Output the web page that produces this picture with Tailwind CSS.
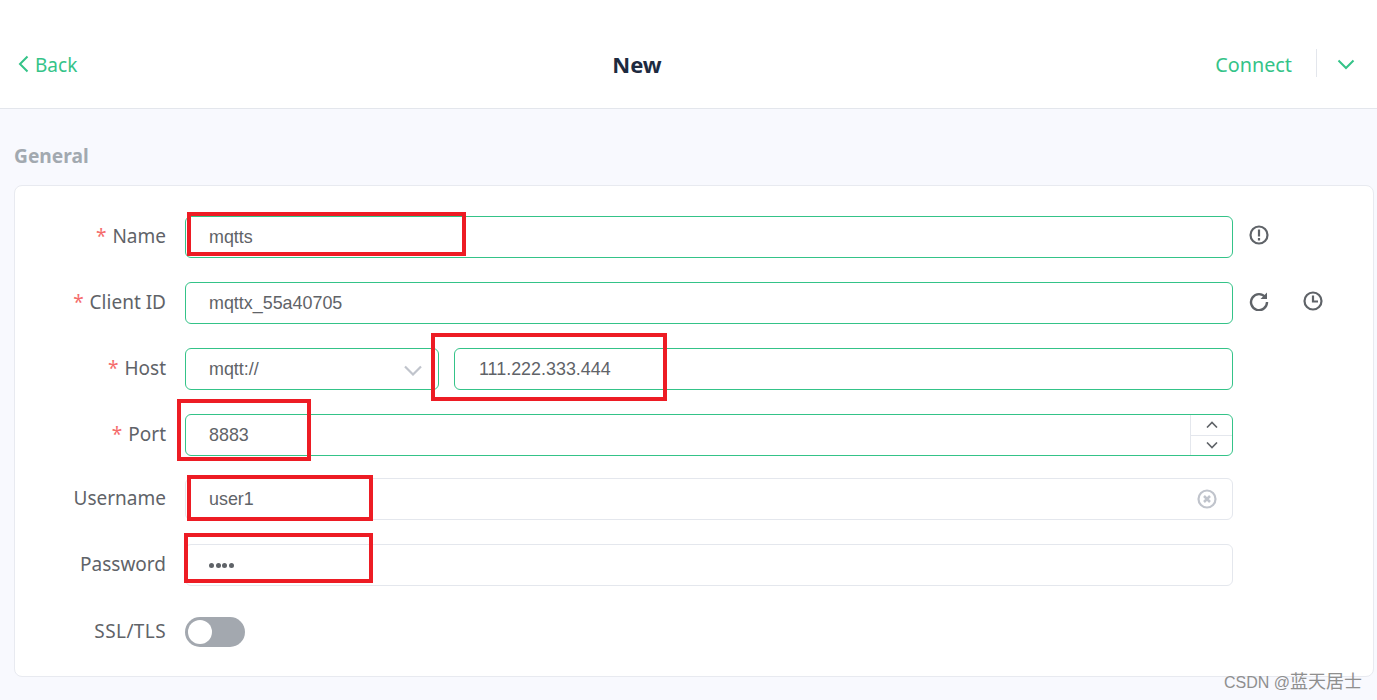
<!DOCTYPE html>
<html lang="en">
<head>
    <meta charset="UTF-8">
    <title>New Connection</title>
    <script src="https://cdn.jsdelivr.net/npm/@tailwindcss/browser@4"></script>
</head>
<body class="bg-[#f8f9fe] h-[700px] overflow-hidden relative font-['Noto_Sans',sans-serif]">
    <!-- header -->
    <header class="h-[109px] bg-white border-b border-[#e3e6ec] flex items-center justify-between pl-[18px] pr-[22px] pt-[20px]">
        <div class="w-[200px] flex items-center gap-[6px] text-[#34c388] text-[19px]">
            <svg class="w-[11px] h-[18px]" viewBox="0 0 11 18" fill="none" stroke="currentColor" stroke-width="2"><path d="M9.5 1.500 2 9l7.500 7.500"/></svg>
            <span class="mt-[2px]">Back</span>
        </div>
        <h1 class="text-[22px] font-bold text-[#1d2a3f]">New</h1>
        <div class="w-[299px] flex items-center justify-end text-[#34c388] text-[19.800px]">
            <span class="mt-[2px]">Connect</span>
            <span class="w-px h-[28px] bg-[#e3e6ec] ml-[24px] mr-[20px] -translate-y-px"></span>
            <svg class="w-[18px] h-[11px]" viewBox="0 0 18 11" fill="none" stroke="currentColor" stroke-width="2"><path d="M1.500 1.500 9 9l7.500-7.500"/></svg>
        </div>
    </header>

    <main class="pl-[14px] pr-[3px]">
        <h2 class="text-[19.200px] font-bold text-[#a2a9b0] h-[76px] pt-[32px] leading-[30px]">General</h2>

        <section class="bg-white border border-[#e8eaf0] rounded-[8px] h-[492px] pt-[30px] text-[19px] text-[#5f6368]">
            <!-- Name -->
            <div class="flex items-center h-[42px]">
                <label class="w-[151px] pb-[2px] text-right"><span class="text-[#f56c6c] mr-[6px]">*</span>Name</label>
                <div class="ml-[19px] w-[1048px] h-[42px] border border-[#34c388] rounded-[6px] flex items-center pl-[23px] font-['Liberation_Sans',sans-serif] text-[17.900px]">mqtts</div>
                <svg class="ml-[16px] mb-[4px] w-[20px] h-[20px]" viewBox="0 0 20 20" fill="none" stroke="#5f6368" stroke-width="2.200"><circle cx="10" cy="10" r="8.500"/><path d="M10 4.500v7M10 13v2.500"/></svg>
            </div>
            <!-- Client ID -->
            <div class="flex items-center h-[42px] mt-[24px]">
                <label class="w-[151px] pb-[2px] text-right"><span class="text-[#f56c6c] mr-[6px]">*</span>Client ID</label>
                <div class="ml-[19px] w-[1048px] h-[42px] border border-[#34c388] rounded-[6px] flex items-center pl-[23px] font-['Liberation_Sans',sans-serif] text-[17.900px]">mqttx_55a40705</div>
                <svg class="ml-[16px] mb-[4px] w-[20px] h-[20px]" viewBox="0 0 20 20" fill="none" stroke="#5f6368" stroke-width="2.400"><path d="M16.500 6.500A8 8 0 1 0 18 11"/><path d="M18 1.500v6.500h-6.500z" fill="#5f6368" stroke="none"/></svg>
                <svg class="ml-[34px] mb-[4px] w-[20px] h-[20px]" viewBox="0 0 20 20" fill="none" stroke="#5f6368" stroke-width="2.200"><circle cx="10" cy="10" r="8.500"/><path d="M10 4.500V10.500h5"/></svg>
            </div>
            <!-- Host -->
            <div class="flex items-center h-[42px] mt-[24px]">
                <label class="w-[151px] pb-[2px] text-right"><span class="text-[#f56c6c] mr-[6px]">*</span>Host</label>
                <div class="ml-[19px] w-[254px] h-[42px] border border-[#34c388] rounded-[6px] flex items-center justify-between pl-[23px] pr-[16px] font-['Liberation_Sans',sans-serif] text-[17.900px]">
                    <span>mqtt://</span>
                    <svg class="w-[18px] h-[11px] mt-[3px]" viewBox="0 0 18 11" fill="none" stroke="#c0c4cc" stroke-width="2.200"><path d="M1 1.500 9 9.500l8-8"/></svg>
                </div>
                <div class="ml-[15px] w-[779px] h-[42px] border border-[#34c388] rounded-[6px] flex items-center pl-[24px] font-['Liberation_Sans',sans-serif] text-[17.900px]">111.222.333.444</div>
            </div>
            <!-- Port -->
            <div class="flex items-center h-[42px] mt-[24px]">
                <label class="w-[151px] pb-[2px] text-right"><span class="text-[#f56c6c] mr-[6px]">*</span>Port</label>
                <div class="ml-[19px] w-[1048px] h-[42px] border border-[#34c388] rounded-[6px] flex items-center justify-between pl-[23px] font-['Liberation_Sans',sans-serif] text-[17.900px]">
                    <span>8883</span>
                    <div class="w-[42px] h-full border-l border-[#e4e7ed] flex flex-col">
                        <div class="flex-1 flex items-center justify-center border-b border-[#e4e7ed]">
                            <svg class="w-[12px] h-[7px]" viewBox="0 0 12 7" fill="none" stroke="#5f6368" stroke-width="1.600"><path d="M1 6.500 6 1.500l5 5"/></svg>
                        </div>
                        <div class="flex-1 flex items-center justify-center">
                            <svg class="w-[12px] h-[7px]" viewBox="0 0 12 7" fill="none" stroke="#5f6368" stroke-width="1.600"><path d="M1 .5 6 5.500l5-5"/></svg>
                        </div>
                    </div>
                </div>
            </div>
            <!-- Username -->
            <div class="flex items-center h-[42px] mt-[22px]">
                <label class="w-[151px] pb-[2px] text-right">Username</label>
                <div class="ml-[19px] w-[1048px] h-[42px] border border-[#e4e7ed] rounded-[6px] flex items-center justify-between pl-[23px] pr-[15px] font-['Liberation_Sans',sans-serif] text-[17.900px]">
                    <span>user1</span>
                    <svg class="w-[20px] h-[20px] mb-px" viewBox="0 0 20 20" fill="none" stroke="#c0c4cc" stroke-width="2.200"><circle cx="10" cy="10" r="8.500"/><path d="m7 7 6 6M13 7l-6 6" stroke-width="2.500"/></svg>
                </div>
            </div>
            <!-- Password -->
            <div class="flex items-center h-[42px] mt-[24px]">
                <label class="w-[151px] pb-[2px] text-right">Password</label>
                <div class="ml-[19px] w-[1048px] h-[42px] border border-[#e4e7ed] rounded-[6px] flex items-center gap-[1.500px] pl-[23px]">
                    <span class="w-[5px] h-[5px] rounded-full bg-[#5f6368]"></span>
                    <span class="w-[5px] h-[5px] rounded-full bg-[#5f6368]"></span>
                    <span class="w-[5px] h-[5px] rounded-full bg-[#5f6368]"></span>
                    <span class="w-[5px] h-[5px] rounded-full bg-[#5f6368]"></span>
                </div>
            </div>
            <!-- SSL/TLS -->
            <div class="flex items-center h-[30px] mt-[31px]">
                <label class="w-[151px] pb-[2px] text-right tracking-[0.400px]">SSL/TLS</label>
                <div class="ml-[19px] w-[60px] h-[30px] rounded-full bg-[#a3a8af] p-[3px]">
                    <div class="w-[24px] h-[24px] rounded-full bg-white"></div>
                </div>
            </div>
        </section>
    </main>

    <!-- red annotation boxes drawn over the form -->
    <div class="absolute left-[187px] top-[212px] w-[279px] h-[44px] border-[4px] border-[#ed1c24]"></div>
    <div class="absolute left-[431px] top-[333px] w-[236px] h-[68px] border-[4px] border-[#ed1c24]"></div>
    <div class="absolute left-[177px] top-[399px] w-[134px] h-[62px] border-[4px] border-[#ed1c24]"></div>
    <div class="absolute left-[187px] top-[475px] w-[186px] h-[46px] border-[4px] border-[#ed1c24]"></div>
    <div class="absolute left-[184px] top-[533px] w-[189px] h-[50px] border-[4px] border-[#ed1c24]"></div>

    <!-- watermark -->
    <div class="absolute right-[15px] top-[670px] text-[18px] leading-[24px] text-[#8f8f8f] font-['Liberation_Sans','Noto_Sans_CJK_SC',sans-serif]"><span class="text-[16px]">CSDN @</span>蓝天居士</div>
</body>
</html>
